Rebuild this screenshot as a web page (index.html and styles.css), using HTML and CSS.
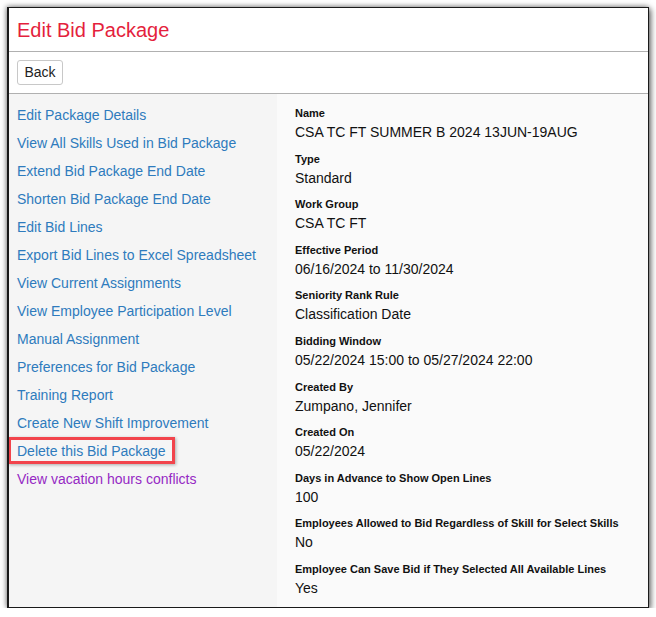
FILE: index.html
```html
<!DOCTYPE html>
<html>
<head>
<meta charset="utf-8">
<link rel="stylesheet" href="styles.css">
</head>
<body>
<div class="window">
  <div class="header"><h1 class="title">Edit Bid Package</h1></div>
  <div class="toolbar"><button class="btn">Back</button></div>
  <div class="content">
    <ul class="links">
      <li><a href="#">Edit Package Details</a></li>
      <li><a href="#">View All Skills Used in Bid Package</a></li>
      <li><a href="#">Extend Bid Package End Date</a></li>
      <li><a href="#">Shorten Bid Package End Date</a></li>
      <li><a href="#">Edit Bid Lines</a></li>
      <li><a href="#">Export Bid Lines to Excel Spreadsheet</a></li>
      <li><a href="#">View Current Assignments</a></li>
      <li><a href="#">View Employee Participation Level</a></li>
      <li><a href="#">Manual Assignment</a></li>
      <li><a href="#">Preferences for Bid Package</a></li>
      <li><a href="#">Training Report</a></li>
      <li><a href="#">Create New Shift Improvement</a></li>
      <li><a href="#" class="highlight">Delete this Bid Package</a></li>
      <li><a href="#" class="visited">View vacation hours conflicts</a></li>
    </ul>
    <dl class="details">
      <div class="field"><dt>Name</dt><dd>CSA TC FT SUMMER B 2024 13JUN-19AUG</dd></div>
      <div class="field"><dt>Type</dt><dd>Standard</dd></div>
      <div class="field"><dt>Work Group</dt><dd>CSA TC FT</dd></div>
      <div class="field"><dt>Effective Period</dt><dd>06/16/2024 to 11/30/2024</dd></div>
      <div class="field"><dt>Seniority Rank Rule</dt><dd>Classification Date</dd></div>
      <div class="field"><dt>Bidding Window</dt><dd>05/22/2024 15:00 to 05/27/2024 22:00</dd></div>
      <div class="field"><dt>Created By</dt><dd>Zumpano, Jennifer</dd></div>
      <div class="field"><dt>Created On</dt><dd>05/22/2024</dd></div>
      <div class="field"><dt>Days in Advance to Show Open Lines</dt><dd>100</dd></div>
      <div class="field"><dt>Employees Allowed to Bid Regardless of Skill for Select Skills</dt><dd>No</dd></div>
      <div class="field"><dt>Employee Can Save Bid if They Selected All Available Lines</dt><dd>Yes</dd></div>
    </dl>
  </div>
</div>
</body>
</html>
```

FILE: styles.css
```css
html, body {
  margin: 0;
  padding: 0;
  background: #ffffff;
}
body {
  font-family: "Liberation Sans", Arial, sans-serif;
  color: #111;
}
.window {
  margin: 7px 0 0 7px;
  width: 639px;
  height: 599px;
  border: 1px solid #1a1a1a;
  border-left-width: 2px;
  box-shadow: 2px 2px 6px rgba(0, 0, 0, 0.55), -1px -1px 5px rgba(0, 0, 0, 0.35);
  background: #fff;
  display: flex;
  flex-direction: column;
  overflow: hidden;
}
.header {
  height: 44px;
  flex-shrink: 0;
  border-bottom: 1px solid #b0b0b0;
  display: flex;
  align-items: center;
  padding-left: 8px;
  box-sizing: border-box;
}
.title {
  margin: 0;
  font-size: 20px;
  font-weight: normal;
  color: #e41f3d;
  line-height: 24px;
  padding-top: 1px;
}
.toolbar {
  height: 42px;
  flex-shrink: 0;
  border-bottom: 1px solid #b0b0b0;
  box-sizing: border-box;
  padding: 8px 0 0 8px;
}
.btn {
  font-family: "Liberation Sans", Arial, sans-serif;
  font-size: 14px;
  color: #222;
  background: #fff;
  border: 1px solid #c8c8c8;
  border-radius: 3px;
  height: 25px;
  width: 46px;
  padding: 0;
  line-height: 23px;
}
.content {
  flex: 1;
  display: flex;
}
.links {
  list-style: none;
  margin: 0;
  padding: 7px 0 0 8px;
  width: 268px;
  box-sizing: border-box;
  background: #f5f5f5;
}
.links li {
  height: 28px;
  line-height: 28px;
  font-size: 14px;
}
.links a {
  color: #2e7bbd;
  text-decoration: none;
}
.links a.visited {
  color: #9629c4;
}
.highlight {
  position: relative;
}
.highlight::after {
  content: "";
  position: absolute;
  left: -9px;
  right: -9px;
  top: -6px;
  bottom: -5px;
  border: 3px solid #f2444c;
  box-shadow: 1px 1px 3px rgba(0, 0, 0, 0.3);
}
.details {
  flex: 1;
  margin: 0;
  padding: 11px 0 0 18px;
  background: #fafafa;
}
.field {
  margin-bottom: 8.6px;
}
.details dt {
  font-size: 11px;
  font-weight: bold;
  line-height: 16px;
  margin-bottom: 1px;
  color: #111;
}
.details dd {
  margin: 0;
  font-size: 14px;
  line-height: 20px;
  color: #111;
}
```
